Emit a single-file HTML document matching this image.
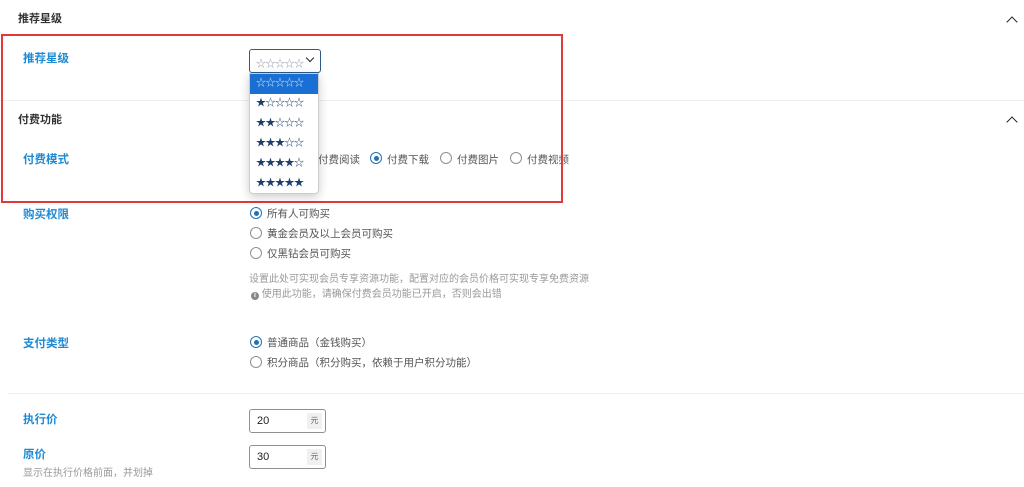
<!DOCTYPE html><html><head><meta charset="utf-8"><style>
body{margin:0;width:1024px;height:487px;background:#fff;font-family:"Liberation Sans","Noto Sans CJK SC",sans-serif;position:relative;overflow:hidden;color:#444}
.a{position:absolute;white-space:nowrap}
.h{font-size:11px;font-weight:bold;color:#333}
.l{font-size:11.5px;font-weight:bold;color:#1f8ad4}
.t{font-size:10.5px;color:#555}
.g{font-size:10px;color:#999}
.r{position:absolute;width:12px;height:12px;border:1px solid #8c8f94;border-radius:50%;box-sizing:border-box;background:#fff}
.r.c::after{content:"";position:absolute;left:2.5px;top:2.5px;width:5px;height:5px;border-radius:50%;background:#2271b1}
.r.c{border-color:#2271b1}
.chev{position:absolute;width:7px;height:7px;border-left:1.5px solid #222;border-top:1.5px solid #222;transform:rotate(45deg)}
.inp{position:absolute;left:249px;width:77px;height:24px;border:1px solid #8c8f94;border-radius:3px;box-sizing:border-box;font-size:11px;color:#222}
.inp span{position:absolute;left:7px;top:5px}
.inp i{position:absolute;right:3px;top:3px;width:15px;height:16px;background:#f0f0f1;font-style:normal;font-size:8px;color:#666;text-align:center;line-height:16px}
.dd div{height:20px;line-height:20px;padding-left:6px;font-size:10px;color:#1d3f6e;letter-spacing:-0.5px}
</style></head><body>
<div class="a h" style="left:18px;top:10px">推荐星级</div>
<div class="chev" style="left:1008px;top:18px"></div>
<div class="a l" style="left:23px;top:50px">推荐星级</div>
<div class="a" style="left:249px;top:49px;width:72px;height:24px;border:1px solid #2c5b86;border-radius:3px;box-sizing:border-box;font-size:10px;color:#99a;letter-spacing:-0.5px;padding:5px 0 0 6px">☆☆☆☆☆</div>
<div class="chev" style="left:307px;top:55px;transform:rotate(225deg);width:5px;height:5px"></div>
<div class="a" style="left:0;top:100px;width:1024px;height:1px;background:#eee"></div>
<div class="a h" style="left:18px;top:111px">付费功能</div>
<div class="chev" style="left:1008px;top:118px"></div>
<div class="a l" style="left:23px;top:151px">付费模式</div>
<div class="a t" style="left:318px;top:152px">付费阅读</div>
<div class="r c" style="left:370px;top:152px"></div><div class="a t" style="left:387px;top:152px">付费下载</div>
<div class="r" style="left:440px;top:152px"></div><div class="a t" style="left:457px;top:152px">付费图片</div>
<div class="r" style="left:510px;top:152px"></div><div class="a t" style="left:527px;top:152px">付费视频</div>
<div class="a" style="left:1px;top:34px;width:562px;height:169px;border:2px solid #e03a3a;box-sizing:border-box"></div>
<div class="a dd" style="left:249px;top:73px;width:70px;height:121px;background:#fff;border:1px solid #ccc;border-radius:0 0 4px 4px;box-shadow:0 3px 10px rgba(0,0,0,.2);box-sizing:border-box;overflow:hidden">
<div style="background:#1a6fd4;color:#cfe0f5">☆☆☆☆☆</div><div>★☆☆☆☆</div><div>★★☆☆☆</div><div>★★★☆☆</div><div>★★★★☆</div><div>★★★★★</div></div>
<div class="a l" style="left:23px;top:206px">购买权限</div>
<div class="r c" style="left:250px;top:207px"></div><div class="a t" style="left:267px;top:206px">所有人可购买</div>
<div class="r" style="left:250px;top:227px"></div><div class="a t" style="left:267px;top:226px">黄金会员及以上会员可购买</div>
<div class="r" style="left:250px;top:247px"></div><div class="a t" style="left:267px;top:246px">仅黑钻会员可购买</div>
<div class="a g" style="left:249px;top:270px">设置此处可实现会员专享资源功能，配置对应的会员价格可实现专享免费资源</div>
<div class="a g" style="left:251px;top:285px"><span style="display:inline-block;width:8px;height:8px;border-radius:50%;background:#888;color:#fff;font-size:7px;line-height:8px;text-align:center;font-weight:bold">i</span> 使用此功能，请确保付费会员功能已开启，否则会出错</div>
<div class="a l" style="left:23px;top:335px">支付类型</div>
<div class="r c" style="left:250px;top:336px"></div><div class="a t" style="left:267px;top:335px">普通商品（金钱购买）</div>
<div class="r" style="left:250px;top:356px"></div><div class="a t" style="left:267px;top:355px">积分商品（积分购买，依赖于用户积分功能）</div>
<div class="a" style="left:8px;top:393px;width:1016px;height:1px;background:#f0f0f0"></div>
<div class="a l" style="left:23px;top:411px">执行价</div>
<div class="inp" style="top:409px"><span>20</span><i>元</i></div>
<div class="a l" style="left:23px;top:446px">原价</div>
<div class="a g" style="left:23px;top:464px">显示在执行价格前面，并划掉</div>
<div class="inp" style="top:445px"><span>30</span><i>元</i></div>
</body></html>
